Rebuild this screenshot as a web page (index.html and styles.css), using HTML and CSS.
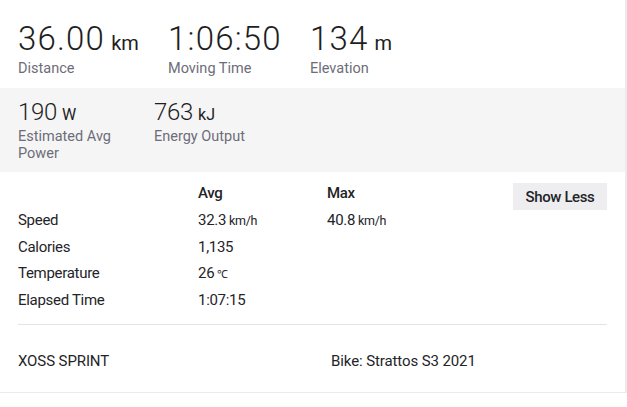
FILE: index.html
```html
<!DOCTYPE html>
<html>
<head>
<meta charset="utf-8">
<link rel="stylesheet" href="styles.css">
</head>
<body>
<div class="card">
  <div class="primary">
    <div class="stat wide1">
      <div class="big">36.00<span class="unit">km</span></div>
      <div class="label">Distance</div>
    </div>
    <div class="stat wide2">
      <div class="big">1:06:50</div>
      <div class="label">Moving Time</div>
    </div>
    <div class="stat">
      <div class="big">134<span class="unit">m</span></div>
      <div class="label">Elevation</div>
    </div>
  </div>
  <div class="secondary">
    <div class="stat2 s1">
      <div class="mid">190<span class="unit2">W</span></div>
      <div class="label">Estimated Avg Power</div>
    </div>
    <div class="stat2">
      <div class="mid">763<span class="unit2">kJ</span></div>
      <div class="label">Energy Output</div>
    </div>
  </div>
  <div class="details">
    <div class="table">
      <div class="row head">
        <div class="c1"></div>
        <div class="c2">Avg</div>
        <div class="c3">Max</div>
      </div>
      <div class="row">
        <div class="c1">Speed</div>
        <div class="c2">32.3<span class="su">km/h</span></div>
        <div class="c3">40.8<span class="su">km/h</span></div>
      </div>
      <div class="row">
        <div class="c1">Calories</div>
        <div class="c2">1,135</div>
        <div class="c3"></div>
      </div>
      <div class="row">
        <div class="c1">Temperature</div>
        <div class="c2">26<span class="su deg">℃</span></div>
        <div class="c3"></div>
      </div>
      <div class="row">
        <div class="c1">Elapsed Time</div>
        <div class="c2">1:07:15</div>
        <div class="c3"></div>
      </div>
    </div>
    <button class="btn">Show Less</button>
  </div>
  <div class="divider"></div>
  <div class="footer">
    <div class="device">XOSS SPRINT</div>
    <div class="bike">Bike: Strattos S3 2021</div>
  </div>
</div>
</body>
</html>
```
FILE: styles.css
```css
* { box-sizing: border-box; }
html, body { margin: 0; padding: 0; background: #ffffff; }
body {
  width: 627px;
  height: 407px;
  overflow: hidden;
  font-family: Roboto, "Liberation Sans", sans-serif;
  color: #242428;
}
.card {
  width: 627px;
  height: 393px;
  background: #fff;
  border-right: 2px solid #ebebef;
  border-bottom: 1px solid #ebebef;
}
.primary {
  display: flex;
  padding: 20px 0 0 18px;
  height: 88px;
}
.stat { display: flex; flex-direction: column; }
.wide1 { width: 150px; }
.wide2 { width: 142px; }
.big {
  font-size: 33px;
  line-height: 38px;
  height: 38px;
  font-weight: 300;
  letter-spacing: 1.2px;
  color: #1e1e22;
}
.unit {
  font-size: 20px;
  line-height: 1;
  margin-left: 6px;
  font-weight: 400;
  letter-spacing: 0;
}
.label {
  font-size: 14.5px;
  line-height: 18px;
  color: #6d6d78;
}
.primary .label { margin-top: 2px; }
.secondary {
  display: flex;
  background: #f5f5f6;
  height: 84px;
  padding: 11px 0 0 18px;
}
.secondary .label { line-height: 17px; margin-top: 2px; }
.stat2 { display: flex; flex-direction: column; }
.s1 { width: 136px; }
.s1 .label { width: 112px; }
.mid {
  font-size: 24px;
  line-height: 27px;
  height: 27px;
  font-weight: 300;
  color: #1e1e22;
  letter-spacing: -0.3px;
}
.unit2 { font-size: 16px; line-height: 1; margin-left: 5px; font-weight: 400; letter-spacing: 0; }
.details {
  display: flex;
  justify-content: space-between;
  padding: 11px 18px 0 18px;
  height: 152px;
}
.table { display: flex; flex-direction: column; }
.row {
  display: flex;
  height: 26.5px;
  align-items: center;
  font-size: 15px;
  letter-spacing: -0.3px;
}
.row.head { font-weight: 500; height: 20px; margin-bottom: 4px; }
.c1 { width: 180px; }
.c2 { width: 129px; }
.c3 { width: 120px; }
.su { font-size: 12.5px; margin-left: 3px; }
.deg { font-size: 11px; }
.btn {
  align-self: flex-start;
  margin-top: 0;
  height: 27px;
  width: 94px;
  border: none;
  background: #eeeef0;
  font-family: Roboto, "Liberation Sans", sans-serif;
  font-size: 15px;
  font-weight: 500;
  color: #242428;
  letter-spacing: -0.4px;
  padding: 0;
}
.divider {
  margin: 0 18px;
  height: 1px;
  background: #e4e4e8;
}
.footer {
  display: flex;
  padding: 27px 18px 0 18px;
  font-size: 15px;
  letter-spacing: -0.1px;
}
.device { width: 313px; }
```
